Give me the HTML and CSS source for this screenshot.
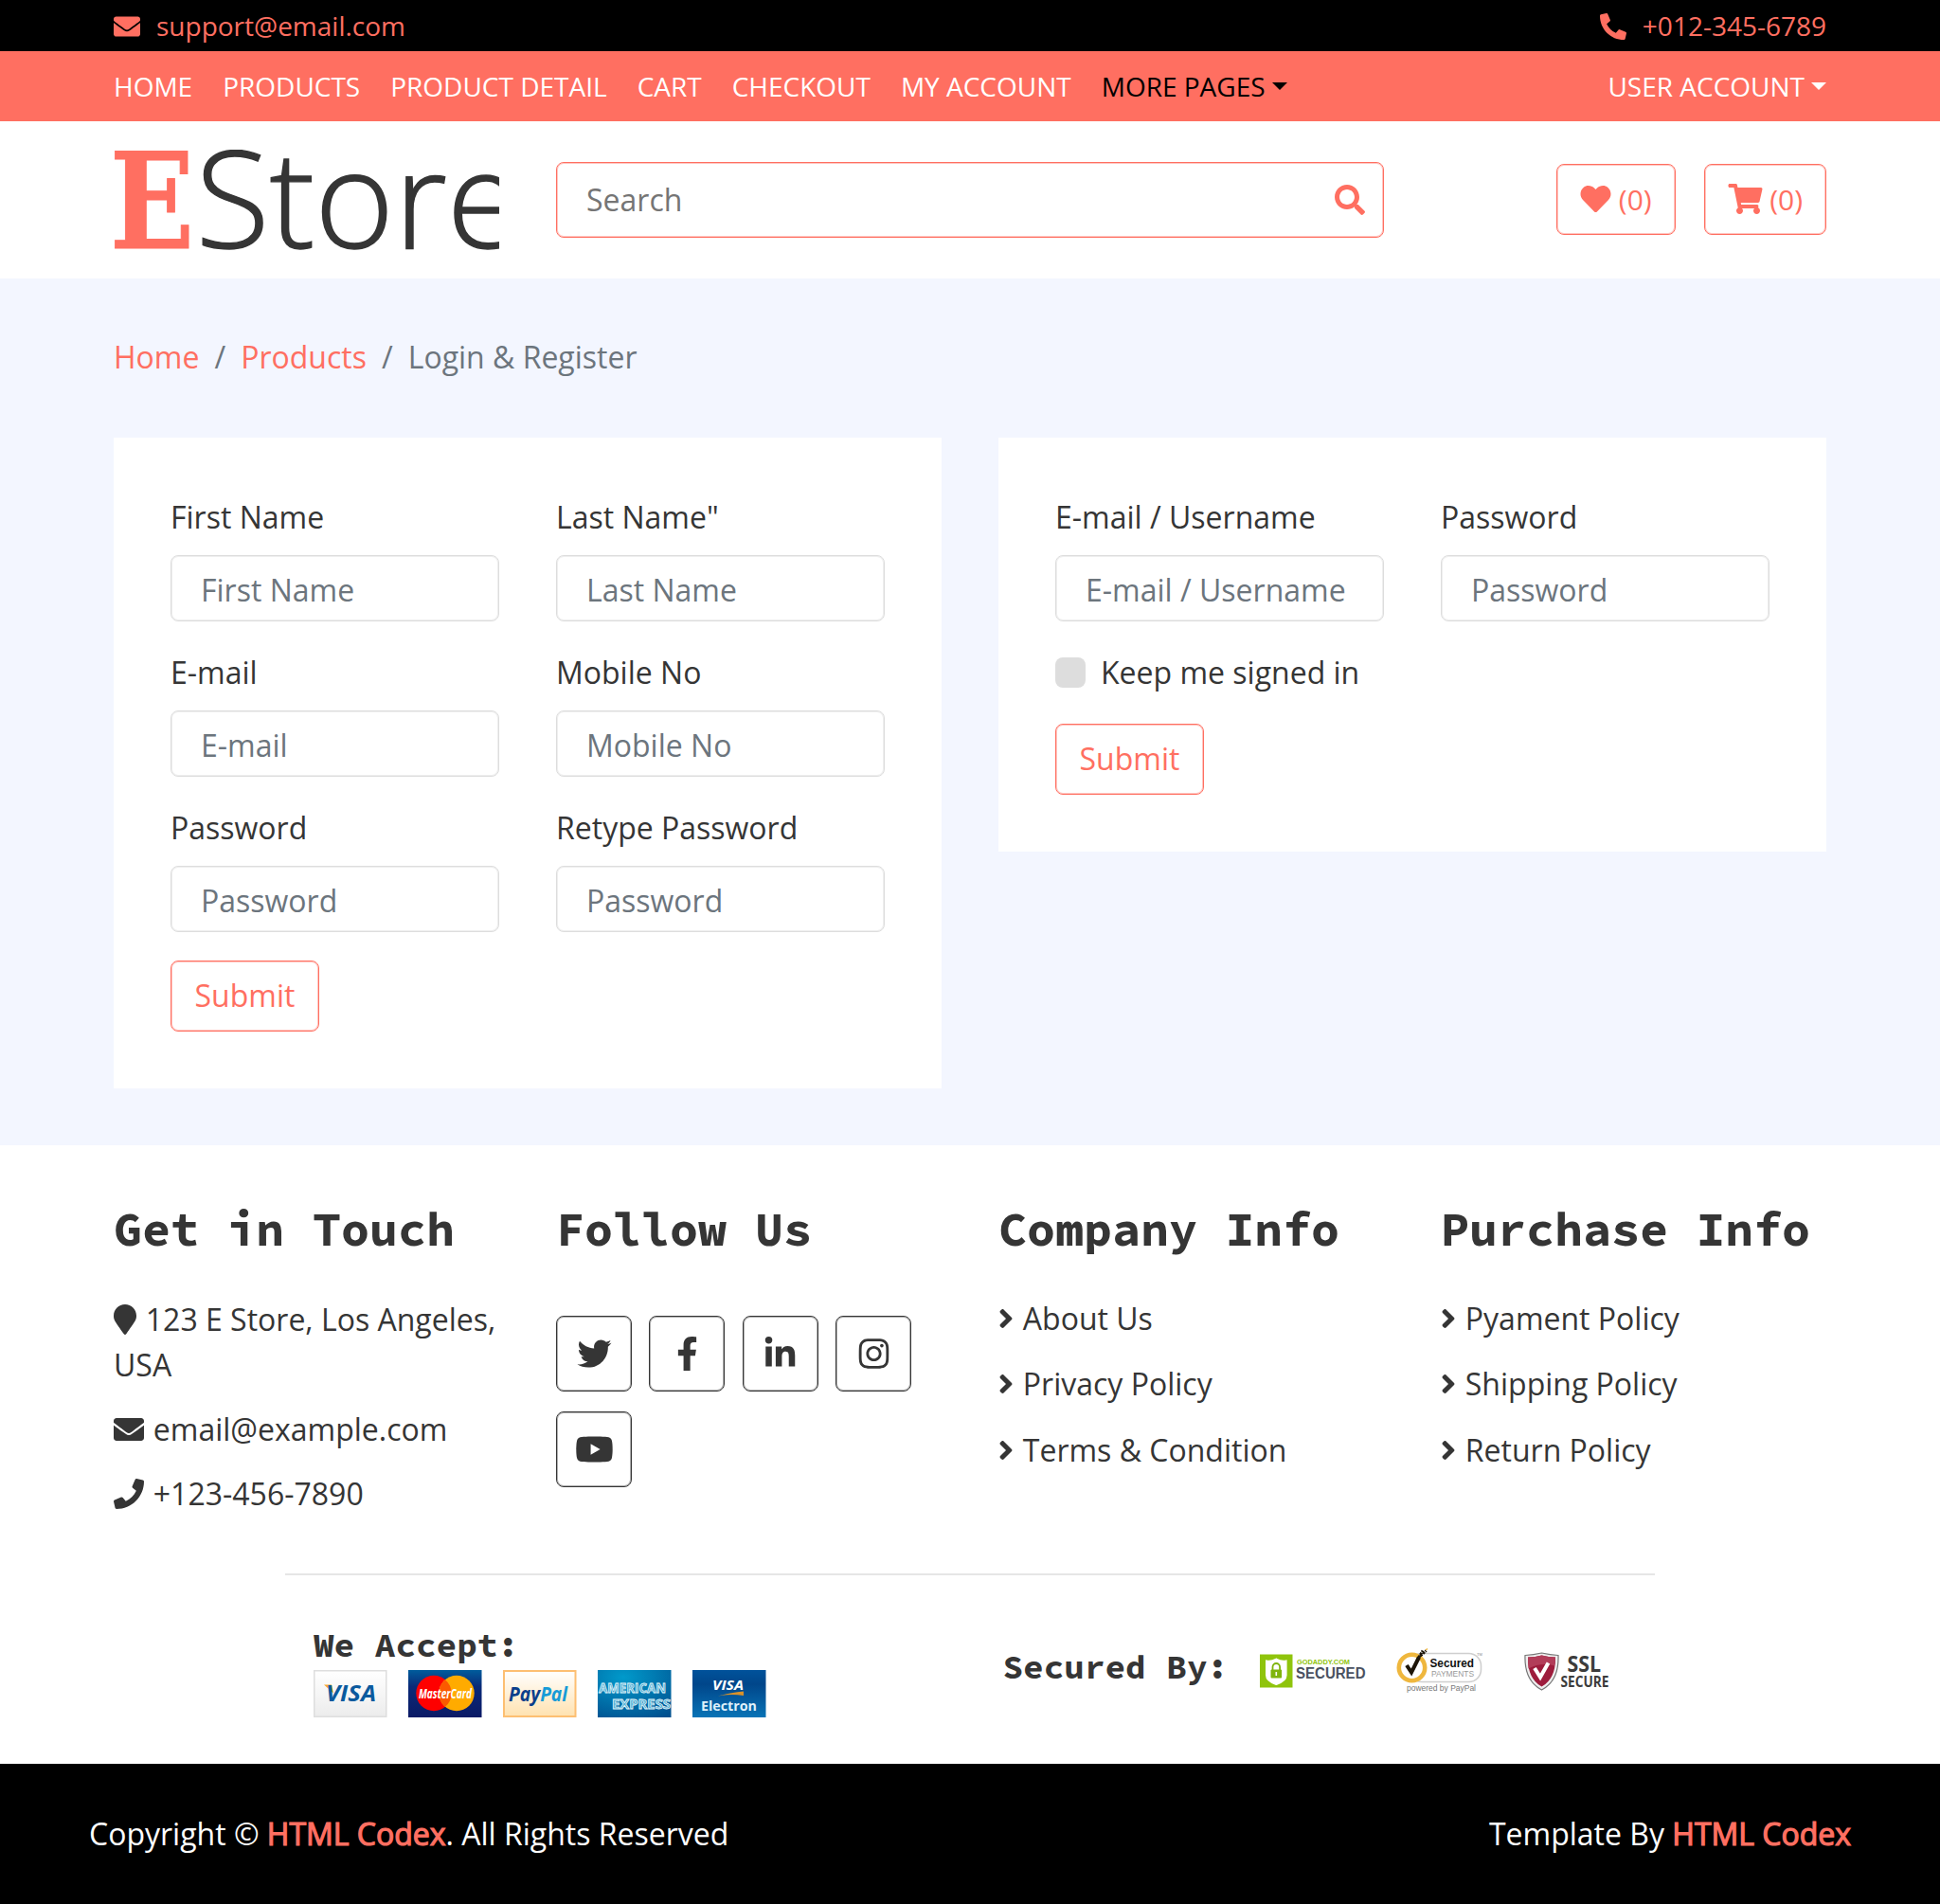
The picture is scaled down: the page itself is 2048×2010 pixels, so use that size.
FILE: index.html
```html
<!DOCTYPE html>
<html lang="en">
<head>
<meta charset="utf-8">
<title>E Store - Login &amp; Register</title>
<link rel="stylesheet" href="styles.css">
</head>
<body>
<svg class="sprite" aria-hidden="true">
  <symbol id="envelope" viewBox="0 0 512 512"><path d="M502.3 190.8c3.9-3.1 9.7-.2 9.7 4.7V400c0 26.5-21.5 48-48 48H48c-26.5 0-48-21.5-48-48V195.6c0-5 5.7-7.8 9.7-4.7 22.4 17.4 52.1 39.5 154.1 113.6 21.1 15.4 56.7 47.8 92.2 47.6 35.7.3 72-32.8 92.3-47.6 102-74.1 131.6-96.3 154-113.7zM256 320c23.2.4 56.6-29.2 73.4-41.4 132.7-96.3 142.8-104.7 173.4-128.7 5.8-4.5 9.2-11.5 9.2-18.9v-19c0-26.5-21.5-48-48-48H48c-26.5 0-48 21.5-48 48v19c0 7.4 3.4 14.3 9.2 18.9 30.6 23.9 40.7 32.4 173.4 128.7 16.8 12.2 50.2 41.8 73.4 41.4z"/></symbol>
  <symbol id="phone-alt" viewBox="0 0 512 512"><path d="M497.39 361.8l-112-48a24 24 0 0 0-28 6.9l-49.6 60.6A370.66 370.66 0 0 1 130.6 204.11l60.6-49.6a23.94 23.94 0 0 0 6.9-28l-48-112A24.16 24.16 0 0 0 122.6.61l-104 24A24 24 0 0 0 0 48c0 256.5 207.9 464 464 464a24 24 0 0 0 23.4-18.6l24-104a24.29 24.29 0 0 0-14.01-27.6z"/></symbol>
  <symbol id="phone" viewBox="0 0 512 512"><path d="M493.4 24.6l-104-24c-11.3-2.6-22.9 3.3-27.5 13.9l-48 112c-4.2 9.8-1.4 21.3 6.9 28l60.6 49.6c-36 76.7-98.9 140.5-177.2 177.2l-49.6-60.6c-6.8-8.3-18.2-11.1-28-6.9l-112 48C3.9 366.5-2 378.1.6 389.4l24 104C27.1 504.2 36.7 512 48 512c256.1 0 464-207.5 464-464 0-11.2-7.7-20.9-18.6-23.4z"/></symbol>
  <symbol id="marker" viewBox="0 0 384 512"><path d="M172.268 501.67C26.97 291.031 0 269.413 0 192 0 85.961 85.961 0 192 0s192 85.961 192 192c0 77.413-26.97 99.031-172.268 309.67-9.535 13.774-29.93 13.773-39.464 0z"/></symbol>
  <symbol id="heart" viewBox="0 0 512 512"><path d="M462.3 62.6C407.5 15.9 326 24.3 275.7 76.2L256 96.5l-19.7-20.3C186.1 24.3 104.5 15.9 49.7 62.6c-62.8 53.6-66.1 149.8-9.9 207.9l193.5 199.8c12.5 12.9 32.8 12.9 45.3 0l193.5-199.8c56.3-58.1 53-154.3-9.8-207.9z"/></symbol>
  <symbol id="cart" viewBox="0 0 576 512"><path d="M528.12 301.319l47.273-208C578.806 78.301 567.391 64 551.99 64H159.208l-9.166-44.81C147.758 8.021 137.93 0 126.529 0H24C10.745 0 0 10.745 0 24v16c0 13.255 10.745 24 24 24h69.883l70.248 343.435C147.325 417.1 136 435.222 136 456c0 30.928 25.072 56 56 56s56-25.072 56-56c0-15.674-6.447-29.835-16.824-40h209.647C430.447 426.165 424 440.326 424 456c0 30.928 25.072 56 56 56s56-25.072 56-56c0-22.172-12.888-41.332-31.579-50.405l5.517-24.276c3.413-15.018-8.002-29.319-23.403-29.319H218.117l-6.545-32h293.145c11.206 0 20.92-7.754 23.403-18.681z"/></symbol>
  <symbol id="search" viewBox="0 0 512 512"><path d="M505 442.7L405.3 343c-4.5-4.5-10.6-7-17-7H372c27.6-35.3 44-79.7 44-128C416 93.1 322.9 0 208 0S0 93.1 0 208s93.1 208 208 208c48.3 0 92.7-16.4 128-44v16.3c0 6.4 2.5 12.5 7 17l99.7 99.7c9.4 9.4 24.6 9.4 33.9 0l28.3-28.3c9.4-9.4 9.4-24.6.1-34zM208 336c-70.7 0-128-57.2-128-128 0-70.7 57.2-128 128-128 70.7 0 128 57.2 128 128 0 70.7-57.2 128-128 128z"/></symbol>
  <symbol id="angle" viewBox="0 0 256 512"><path d="M224.3 273l-136 136c-9.4 9.4-24.6 9.4-33.9 0l-22.6-22.6c-9.4-9.4-9.4-24.6 0-33.9l96.4-96.4-96.4-96.4c-9.4-9.4-9.4-24.6 0-33.9L54.3 103c9.4-9.4 24.6-9.4 33.9 0l136 136c9.5 9.4 9.5 24.6.1 34z"/></symbol>
  <symbol id="twitter" viewBox="0 0 512 512"><path d="M459.37 151.716c.325 4.548.325 9.097.325 13.645 0 138.72-105.583 298.558-298.558 298.558-59.452 0-114.68-17.219-161.137-47.106 8.447.974 16.568 1.299 25.34 1.299 49.055 0 94.213-16.568 130.274-44.832-46.132-.975-84.792-31.188-98.112-72.772 6.498.974 12.995 1.624 19.818 1.624 9.421 0 18.843-1.3 27.614-3.573-48.081-9.747-84.143-51.98-84.143-102.985v-1.299c13.969 7.797 30.214 12.67 47.431 13.319-28.264-18.843-46.781-51.005-46.781-87.391 0-19.492 5.197-37.36 14.294-52.954 51.655 63.675 129.3 105.258 216.365 109.807-1.624-7.797-2.599-15.918-2.599-24.04 0-57.828 46.782-104.934 104.934-104.934 30.213 0 57.502 12.67 76.67 33.137 23.715-4.548 46.456-13.32 66.599-25.34-7.798 24.366-24.366 44.833-46.132 57.827 21.117-2.273 41.584-8.122 60.426-16.243-14.292 20.791-32.161 39.308-52.628 54.253z"/></symbol>
  <symbol id="facebook" viewBox="0 0 320 512"><path d="M279.14 288l14.22-92.66h-88.91v-60.13c0-25.35 12.42-50.06 52.24-50.06h40.42V6.26S260.43 0 225.36 0c-73.22 0-121.08 44.38-121.08 124.72v70.62H22.89V288h81.39v224h100.17V288z"/></symbol>
  <symbol id="linkedin" viewBox="0 0 448 512"><path d="M100.28 448H7.4V148.9h92.88zM53.79 108.1C24.09 108.1 0 83.5 0 53.8a53.79 53.79 0 0 1 107.58 0c0 29.7-24.1 54.3-53.79 54.3zM447.9 448h-92.68V302.4c0-34.7-.7-79.2-48.29-79.2-48.29 0-55.69 37.7-55.69 76.7V448h-92.78V148.9h89.08v40.8h1.3c12.4-23.5 42.69-48.3 87.88-48.3 94 0 111.28 61.9 111.28 142.3V448z"/></symbol>
  <symbol id="instagram" viewBox="0 0 448 512"><path d="M224.1 141c-63.6 0-114.9 51.3-114.9 114.9s51.3 114.9 114.9 114.9S339 319.5 339 255.9 287.7 141 224.1 141zm0 189.6c-41.1 0-74.7-33.5-74.7-74.7s33.5-74.7 74.7-74.7 74.7 33.5 74.7 74.7-33.6 74.7-74.7 74.7zm146.4-194.3c0 14.9-12 26.8-26.8 26.8-14.9 0-26.8-12-26.8-26.8s12-26.8 26.8-26.8 26.8 12 26.8 26.8zm76.1 27.2c-1.7-35.9-9.9-67.7-36.2-93.9-26.2-26.2-58-34.4-93.9-36.2-37-2.1-147.9-2.1-184.9 0-35.8 1.7-67.6 9.9-93.9 36.1s-34.4 58-36.2 93.9c-2.1 37-2.1 147.9 0 184.9 1.7 35.9 9.9 67.7 36.2 93.9s58 34.4 93.9 36.2c37 2.1 147.9 2.1 184.9 0 35.9-1.7 67.7-9.9 93.9-36.2 26.2-26.2 34.4-58 36.2-93.9 2.1-37 2.1-147.8 0-184.8zM398.8 388c-7.8 19.6-22.9 34.7-42.6 42.6-29.5 11.7-99.5 9-132.1 9s-102.7 2.6-132.1-9c-19.6-7.8-34.7-22.9-42.6-42.6-11.7-29.5-9-99.5-9-132.1s-2.6-102.7 9-132.1c7.8-19.6 22.9-34.7 42.6-42.6 29.5-11.7 99.5-9 132.1-9s102.7-2.6 132.1 9c19.6 7.8 34.7 22.9 42.6 42.6 11.7 29.5 9 99.5 9 132.1s2.7 102.7-9 132.1z"/></symbol>
  <symbol id="youtube" viewBox="0 0 576 512"><path d="M549.655 124.083c-6.281-23.65-24.787-42.276-48.284-48.597C458.781 64 288 64 288 64S117.22 64 74.629 75.486c-23.497 6.322-42.003 24.947-48.284 48.597-11.412 42.867-11.412 132.305-11.412 132.305s0 89.438 11.412 132.305c6.281 23.65 24.787 41.5 48.284 47.821C117.22 448 288 448 288 448s170.78 0 213.371-11.486c23.497-6.321 42.003-24.171 48.284-47.821 11.412-42.867 11.412-132.305 11.412-132.305s0-89.438-11.412-132.305zm-317.51 213.508V175.185l142.739 81.205-142.739 81.201z"/></symbol>
</svg>

<div class="top-bar">
  <span class="top-item"><svg class="icon"><use href="#envelope"/></svg>support@email.com</span>
  <span class="top-item"><svg class="icon"><use href="#phone-alt"/></svg>+012-345-6789</span>
</div>

<nav class="nav">
  <div class="nav-links">
    <a>HOME</a><a>PRODUCTS</a><a>PRODUCT DETAIL</a><a>CART</a><a>CHECKOUT</a><a>MY ACCOUNT</a><a class="dropdown active">MORE PAGES</a>
  </div>
  <a class="dropdown">USER ACCOUNT</a>
</nav>

<header class="header">
  <svg class="logo" width="407" height="106" viewBox="0 0 407 106">
    <text class="logo-e" x="-4" y="103.500" textLength="89" lengthAdjust="spacingAndGlyphs">E</text>
    <text class="logo-store" x="86.500" y="104">Store</text>
  </svg>
  <div class="search">
    <input type="text" placeholder="Search">
    <svg class="icon"><use href="#search"/></svg>
  </div>
  <div class="user">
    <a class="btn-count"><svg class="icon"><use href="#heart"/></svg>(0)</a>
    <a class="btn-count"><svg class="icon wide"><use href="#cart"/></svg>(0)</a>
  </div>
</header>

<main class="login">
  <ul class="breadcrumb">
    <li><a>Home</a></li>
    <li><a>Products</a></li>
    <li>Login &amp; Register</li>
  </ul>
  <div class="panels">
    <form class="panel">
      <label class="field"><span>First Name</span><input type="text" placeholder="First Name"></label>
      <label class="field"><span>Last Name"</span><input type="text" placeholder="Last Name"></label>
      <label class="field"><span>E-mail</span><input type="text" placeholder="E-mail"></label>
      <label class="field"><span>Mobile No</span><input type="text" placeholder="Mobile No"></label>
      <label class="field"><span>Password</span><input type="text" placeholder="Password"></label>
      <label class="field"><span>Retype Password</span><input type="text" placeholder="Password"></label>
      <div class="full"><button type="button" class="submit">Submit</button></div>
    </form>
    <form class="panel">
      <label class="field"><span>E-mail / Username</span><input type="text" placeholder="E-mail / Username"></label>
      <label class="field"><span>Password</span><input type="text" placeholder="Password"></label>
      <div class="full keep"><i class="check"></i>Keep me signed in</div>
      <div class="full"><button type="button" class="submit">Submit</button></div>
    </form>
  </div>
</main>

<footer class="footer">
  <div class="widgets">
    <section>
      <h2>Get in Touch</h2>
      <div class="contact">
        <p><svg class="icon narrow"><use href="#marker"/></svg> 123 E Store, Los Angeles, USA</p>
        <p><svg class="icon"><use href="#envelope"/></svg> email@example.com</p>
        <p><svg class="icon"><use href="#phone"/></svg> +123-456-7890</p>
      </div>
    </section>
    <section>
      <h2>Follow Us</h2>
      <div class="social">
        <a><svg><use href="#twitter"/></svg></a>
        <a><svg><use href="#facebook"/></svg></a>
        <a><svg><use href="#linkedin"/></svg></a>
        <a><svg><use href="#instagram"/></svg></a>
        <a><svg><use href="#youtube"/></svg></a>
      </div>
    </section>
    <section>
      <h2>Company Info</h2>
      <ul class="links">
        <li><svg class="icon angle"><use href="#angle"/></svg> About Us</li>
        <li><svg class="icon angle"><use href="#angle"/></svg> Privacy Policy</li>
        <li><svg class="icon angle"><use href="#angle"/></svg> Terms &amp; Condition</li>
      </ul>
    </section>
    <section>
      <h2>Purchase Info</h2>
      <ul class="links">
        <li><svg class="icon angle"><use href="#angle"/></svg> Pyament Policy</li>
        <li><svg class="icon angle"><use href="#angle"/></svg> Shipping Policy</li>
        <li><svg class="icon angle"><use href="#angle"/></svg> Return Policy</li>
      </ul>
    </section>
  </div>

  <div class="payment">
    <div class="accept">
      <h3>We Accept:</h3>
      <svg class="cards" width="478" height="50" viewBox="0 0 478 50">
        <defs>
          <linearGradient id="g-visa" x2="0" y2="1"><stop offset="0" stop-color="#fff"/><stop offset="1" stop-color="#ececec"/></linearGradient>
          <linearGradient id="g-mc" x2="0" y2="1"><stop offset="0" stop-color="#005c9c"/><stop offset=".35" stop-color="#0a2a78"/><stop offset="1" stop-color="#0b1a66"/></linearGradient>
          <linearGradient id="g-pp" x2="0" y2="1"><stop offset="0" stop-color="#fff"/><stop offset="1" stop-color="#ffe2b0"/></linearGradient>
          <radialGradient id="g-amex" cx=".35" cy=".15" r="1"><stop offset="0" stop-color="#019acb"/><stop offset="1" stop-color="#00508f"/></radialGradient>
          <linearGradient id="g-el" x2="0" y2="1"><stop offset="0" stop-color="#00529b"/><stop offset=".3" stop-color="#00468a"/><stop offset="1" stop-color="#0873b6"/></linearGradient>
        </defs>
        <rect x=".75" y=".75" width="76" height="48.5" fill="url(#g-visa)" stroke="#dedede" stroke-width="1.5"/>
        <path d="M11 15.500h8l2 9z" fill="#f9a72b"/>
        <text class="visa" x="13" y="33" textLength="53" lengthAdjust="spacingAndGlyphs">VISA</text>
        <rect x="100" width="77.500" height="50" fill="url(#g-mc)"/>
        <circle cx="127" cy="24.500" r="18.700" fill="#fe0000"/>
        <circle cx="151" cy="24.500" r="18.700" fill="#ffab00"/>
        <path d="M139 10.200a18.700 18.700 0 0 1 0 28.600a18.700 18.700 0 0 1 0-28.600z" fill="#fb5a00"/>
        <text class="mc" x="111" y="30" textLength="56" lengthAdjust="spacingAndGlyphs">MasterCard</text>
        <rect x="201" y="1" width="75.500" height="48" fill="url(#g-pp)" stroke="#fdbf72" stroke-width="2"/>
        <text class="pp" x="206" y="33" textLength="62" lengthAdjust="spacingAndGlyphs"><tspan fill="#0b3f8b">Pay</tspan><tspan fill="#179bd7">Pal</tspan></text>
        <rect x="300" width="77.500" height="50" fill="url(#g-amex)"/>
        <text class="amex" x="301" y="24" textLength="71" lengthAdjust="spacingAndGlyphs">AMERICAN</text>
        <text class="amex" x="315" y="41" textLength="62" lengthAdjust="spacingAndGlyphs">EXPRESS</text>
        <rect x="400" width="77.500" height="50" fill="url(#g-el)"/>
        <text class="el-visa" x="421" y="20.500" textLength="33" lengthAdjust="spacingAndGlyphs">VISA</text>
        <path d="M427 27.500q10-3 27-5v4.500q-14-2-27 .5z" fill="#d8912a"/>
        <text class="el" x="409" y="42.500" textLength="59" lengthAdjust="spacingAndGlyphs">Electron</text>
      </svg>
    </div>
    <div class="secured">
      <h3>Secured By:</h3>
      <svg class="seals" width="376" height="50" viewBox="0 0 376 50">
        <rect x="1" y="9.500" width="34.500" height="35" fill="#8fc40c"/>
        <path d="M8 16.500q5 1 10.300-2 5.300 3 10.300 2v15q0 6-10.300 9.500Q8 37.500 8 31.500z" fill="#fff" stroke="#fff" stroke-width="2"/>
        <path d="M14.500 26v-3.200a3.800 3.800 0 0 1 7.600 0V26" fill="none" stroke="#7fb40c" stroke-width="1.800"/>
        <rect x="12.500" y="25.500" width="11.600" height="9" rx="1" fill="#7fb40c"/>
        <path d="M18.300 28v4" stroke="#fff" stroke-width="1.600"/>
        <text class="gd-small" x="40" y="20" textLength="56" lengthAdjust="spacingAndGlyphs">GODADDY.COM</text>
        <text class="gd" x="39" y="35" textLength="73.500" lengthAdjust="spacingAndGlyphs">SECURED</text>

        <rect x="159" y="8.500" width="75.500" height="30" rx="13" fill="#fff" stroke="#cfcfcf" stroke-width="1.600"/>
        <circle cx="161.500" cy="23.500" r="13.700" fill="#fff" stroke="#efb73e" stroke-width="4.600"/>
        <path d="M156 21l5 7.500 8-16" fill="none" stroke="#1d1508" stroke-width="4"/>
        <path d="M167 16l6-10.500M170.500 11l6-5.500" stroke="#1d1508" stroke-width="3" stroke-dasharray="2.500 1"/>
        <path d="M176 5l2-1.500" stroke="#efb73e" stroke-width="1.500"/>
        <text class="nt" x="180.500" y="22.500" textLength="46.500" lengthAdjust="spacingAndGlyphs">Secured</text>
        <text class="nt-pay" x="182" y="32.500" textLength="45" lengthAdjust="spacingAndGlyphs">PAYMENTS</text>
        <text class="nt-tm" x="230" y="11">TM</text>
        <text class="nt-by" x="156" y="48" textLength="73" lengthAdjust="spacingAndGlyphs">powered by PayPal</text>

        <path d="M281 10.500q9-.5 17.500-2.500 9 2 17.500 2.500 1 26.500-17.500 36.500Q280 37 281 10.500z" fill="#eee" stroke="#777" stroke-width="1.200"/>
        <path d="M284 12.500q8 0 14.500-2 7.500 2 14.500 2 .5 22.500-14.500 31Q283.500 35 284 12.500z" fill="#9d1c3c"/>
        <path d="M284 12.500q8 0 14.500-2 7.500 2 14.500 2 0 5-1 9-14-4-27.500 3-.5-6-.5-12z" fill="#b23d59"/>
        <path d="M291 24l6 9.500 8.500-15" fill="none" stroke="#fff" stroke-width="4"/>
        <text class="ssl" x="325.500" y="28" textLength="35.500" lengthAdjust="spacingAndGlyphs">SSL</text>
        <text class="ssl-secure" x="318.500" y="44" textLength="51" lengthAdjust="spacingAndGlyphs">SECURE</text>
      </svg>
    </div>
  </div>
</footer>

<div class="footer-bottom">
  <p>Copyright © <a>HTML Codex</a>. All Rights Reserved</p>
  <p>Template By <a>HTML Codex</a></p>
</div>
</body>
</html>
```
FILE: styles.css
```css
* { box-sizing: border-box; }

body {
  margin: 0;
  background: #fff;
  color: #353535;
  font: 32px/48px "Open Sans", sans-serif;
}

h2, h3, p, ul { margin: 0; padding: 0; }
ul { list-style: none; }

.sprite { display: none; }

.icon {
  width: 1em;
  height: 1em;
  fill: currentColor;
  vertical-align: -0.125em;
}

/* Top bar and navigation */
.top-bar {
  display: flex;
  justify-content: space-between;
  height: 54px;
  padding: 0 120px;
  background: #000;
  color: #ff6f61;
  font-size: 28px;
  line-height: 55px;
}
.top-item .icon { margin-right: 17px; }

.nav {
  display: flex;
  justify-content: space-between;
  height: 74px;
  padding: 0 120px;
  background: #ff6f61;
  color: #fff;
  font-size: 28px;
  line-height: 75px;
}
.nav-links { display: flex; gap: 32px; }
.active { color: #000; }
.dropdown::after {
  content: "";
  display: inline-block;
  margin-left: 7px;
  vertical-align: 7px;
  border: 8.400px solid transparent;
  border-top-color: currentColor;
  border-bottom: 0;
}

/* Header */
.header {
  display: grid;
  grid-template-columns: 407px 874px 407px;
  gap: 60px;
  align-items: center;
  height: 166px;
  padding: 0 120px;
}
.logo { display: block; overflow: hidden; }
.logo-e { font: 700 141px "DejaVu Serif", serif; fill: #ff6f61; stroke: #ff6f61; stroke-width: 1px; }
.logo-store { font: 300 143px "Open Sans", sans-serif; fill: #353535; stroke: #353535; stroke-width: 1.400px; }

.search {
  display: flex;
  align-items: center;
  height: 80px;
  padding: 0 19px 1px 31px;
  border: 1px solid #ff6f61;
  border-radius: 8px;
  box-shadow: inset 0 0 0 1px rgba(255, 111, 97, 0.4);
  color: #ff6f61;
}
.search input {
  flex: 1;
  padding: 0;
  border: 0;
  outline: 0;
  background: none;
  font: inherit;
}
.search input::placeholder { color: #757575; }

.user { display: flex; justify-content: flex-end; gap: 30px; margin-top: -1px; }
.btn-count {
  height: 75px;
  padding: 0 24px;
  border: 1px solid #ff6f61;
  border-radius: 8px;
  box-shadow: inset 0 0 0 1px rgba(255, 111, 97, 0.4);
  color: #ff6f61;
  font-size: 30px;
  line-height: 74px;
}
.btn-count .icon { width: 33px; height: 32px; margin-right: 7.500px; vertical-align: -4px; }
.btn-count .wide { width: 37px; }

/* Login and register */
.login { padding: 59px 120px 60px; background: #f3f6ff; }

.breadcrumb { display: flex; margin-bottom: 61px; color: #6c757d; }
.breadcrumb li + li::before { content: "/"; padding: 0 16px; }
.breadcrumb a { color: #ff6f61; }

.panels {
  display: grid;
  grid-template-columns: 1fr 1fr;
  gap: 60px;
  align-items: start;
}
.panel {
  display: grid;
  grid-template-columns: 1fr 1fr;
  gap: 30px 60px;
  padding: 60px;
  background: #fff;
}
.field { display: flex; flex-direction: column; gap: 16px; min-width: 0; }
.field input {
  width: 100%;
  height: 70px;
  padding: 2px 30px 0 31px;
  border: 1px solid #ddd;
  border-radius: 8px;
  box-shadow: inset 0 0 0 1px rgba(221, 221, 221, 0.5);
  font: inherit;
}
.field input::placeholder { color: #6c757d; }
.full { grid-column: 1 / -1; height: 75px; }
.keep { display: flex; align-items: center; gap: 16px; height: 48px; }
.check { width: 32px; height: 32px; border-radius: 8px; background: #ddd; }
.submit {
  display: block;
  width: 157px;
  height: 75px;
  padding: 0 0 2px;
  border: 1px solid #ff6f61;
  border-radius: 8px;
  box-shadow: inset 0 0 0 1px rgba(255, 111, 97, 0.4);
  background: #fff;
  color: #ff6f61;
  font: inherit;
}

/* Footer */
h2, h3 { font-family: "Source Code Pro", "Noto Sans Mono CJK SC", "DejaVu Sans Mono", monospace; font-weight: 700; white-space: nowrap; }
h2 { height: 60px; font-size: 50px; line-height: 58px; }
h3 { height: 43px; font-size: 36px; line-height: 43px; }

.footer { height: 652.600px; padding-top: 60px; }
.widgets {
  display: grid;
  grid-template-columns: repeat(4, 407px);
  gap: 60px;
  height: 392px;
  padding: 0 120px;
}
.contact .icon, .links .icon { margin-right: 1.500px; }
.contact { display: grid; gap: 20px; padding-top: 40px; }
.links { display: grid; gap: 21.500px; padding-top: 38.500px; }
.narrow { width: 0.75em; }
.angle { width: 0.5em; }

.social { display: flex; flex-wrap: wrap; gap: 21px 18.400px; padding-top: 60px; }
.social a {
  display: flex;
  align-items: center;
  justify-content: center;
  width: 80px;
  height: 80px;
  border: 1px solid #353535;
  border-radius: 8px;
  box-shadow: inset 0 0 0 1px rgba(53, 53, 53, 0.4);
}
.social svg { width: 41px; height: 36px; fill: #353535; }

.payment {
  display: grid;
  grid-template-columns: 1fr 1fr;
  margin: 0 301px;
  border-top: 2px solid #e6e6e6;
}
.accept { padding: 52px 30px 0; }
.cards { display: block; margin-top: 5px; }
.secured { display: flex; gap: 33px; padding: 74px 0 0 34.500px; }
.secured h3 { line-height: 46px; }
.seals { flex: none; }

.visa { font: italic 700 24px "Open Sans", sans-serif; fill: #0a5a9e; }
.mc { font: italic 700 15px "Open Sans", sans-serif; fill: #fff; }
.pp { font: italic 700 22px "Open Sans", sans-serif; }
.amex { font: 700 14px "Open Sans", sans-serif; fill: #3fa9d2; stroke: #e4f4fa; stroke-width: 0.800px; }
.el-visa { font: italic 700 15px "Open Sans", sans-serif; fill: #fff; }
.el { font: 700 15px "Open Sans", sans-serif; fill: #dff0fa; }
.gd-small { font: 700 8px "Liberation Sans", sans-serif; fill: #8fc40c; }
.gd { font: 700 16px "Liberation Sans", sans-serif; fill: #4a5160; }
.nt { font: 700 13px "Liberation Sans", sans-serif; fill: #111; }
.nt-pay { font: 9.500px "Liberation Sans", sans-serif; fill: #999; }
.nt-tm { font: 4px "Liberation Sans", sans-serif; fill: #888; }
.nt-by { font: 9px "Liberation Sans", sans-serif; fill: #777; }
.ssl { font: 700 24px "Open Sans", sans-serif; fill: #3c3c3c; }
.ssl-secure { font: 700 16px "Open Sans", sans-serif; fill: #3c3c3c; }

.footer-bottom {
  display: flex;
  justify-content: space-between;
  align-items: center;
  height: 148.400px;
  padding: 0 94px;
  background: #000;
  color: #fff;
}
.footer-bottom a { color: #ff6f61; -webkit-text-stroke: 1.200px #ff6f61; }
```
